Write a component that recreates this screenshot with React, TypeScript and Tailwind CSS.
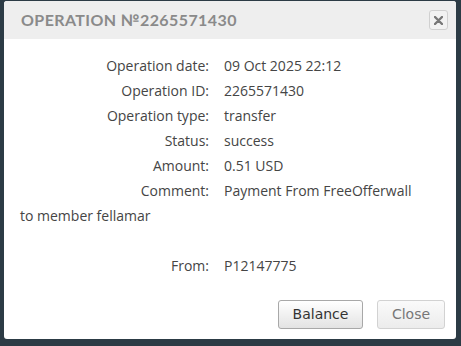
const rows: { label: string; value: string }[] = [
  { label: 'Operation date:', value: '09 Oct 2025 22:12' },
  { label: 'Operation ID:', value: '2265571430' },
  { label: 'Operation type:', value: 'transfer' },
  { label: 'Status:', value: 'success' },
  { label: 'Amount:', value: '0.51 USD' },
];

export default function App() {
  return (
    <div className="h-[346px] w-[461px] bg-[#2c3b45] pt-px pl-1">
      <div className="flex h-[338px] w-[452px] flex-col overflow-hidden rounded-[3px] bg-white">
        {/* Header */}
        <div className="flex h-[38px] items-center justify-between bg-[#eeeeee] pl-[17px] pr-[8px]">
          <h1 className="font-['Lato',sans-serif] text-[16px] font-bold tracking-[0.4px] text-[#8a8a8a]">
            OPERATION №2265571430
          </h1>
          <button className="flex h-[20px] w-[19px] items-center justify-center rounded-[3px] border border-[#d0d0d0] bg-[#f2f2f2] text-[#777]">
            <svg width="9" height="9" viewBox="0 0 9 9">
              <path d="M1 1 L8 8 M8 1 L1 8" stroke="currentColor" strokeWidth="2.4" strokeLinecap="round" />
            </svg>
          </button>
        </div>

        {/* Body */}
        <div className="flex-1 pt-[14px] pl-[16px] pr-[16px] font-['Open_Sans',sans-serif] text-[14px] leading-[25px] text-[#454545]">
          {rows.map((r) => (
            <div key={r.label} className="flex">
              <span className="w-[189px] text-right">{r.label}</span>
              <span className="ml-[15px]">{r.value}</span>
            </div>
          ))}
          <p>
            <span className="inline-block w-[189px] text-right">Comment:</span>
            <span className="ml-[15px]">Payment From FreeOfferwall</span>
            <br />
            to member fellamar
          </p>
          <div className="h-[25px]" />
          <div className="flex">
            <span className="w-[189px] text-right">From:</span>
            <span className="ml-[15px]">P12147775</span>
          </div>
        </div>

        {/* Footer */}
        <div className="flex justify-end gap-[14px] pr-[11px] pb-[10px] font-['DejaVu_Sans',sans-serif] text-[14px]">
          <button className="h-[29px] w-[85px] rounded-[3px] border border-[#a8a8a8] bg-gradient-to-b from-[#ffffff] to-[#e3e3e3] text-[#333]">
            Balance
          </button>
          <button className="h-[29px] w-[68px] rounded-[3px] border border-[#d2d2d2] bg-gradient-to-b from-[#fafafa] to-[#ececec] text-[#777]">
            Close
          </button>
        </div>
      </div>
    </div>
  );
}
